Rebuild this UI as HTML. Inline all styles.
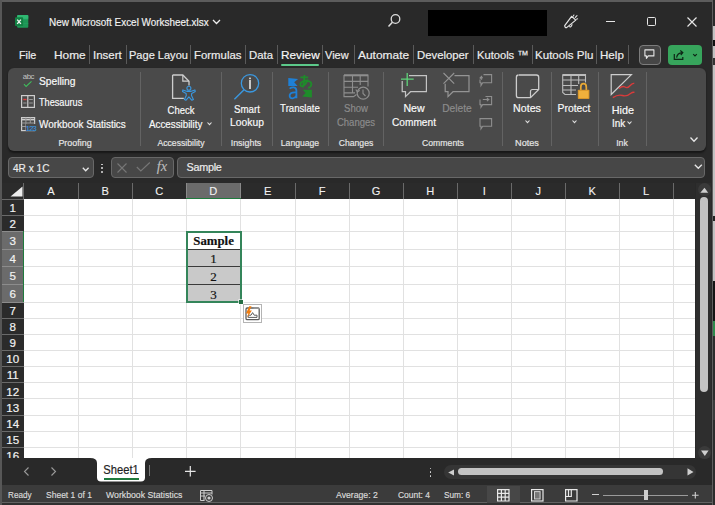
<!DOCTYPE html>
<html><head><meta charset="utf-8">
<style>
*{margin:0;padding:0;box-sizing:border-box}
html,body{width:715px;height:505px;overflow:hidden;background:#292929}
body{position:relative;font-family:"Liberation Sans",sans-serif;color:#fff}
.a{position:absolute;white-space:nowrap;line-height:1;-webkit-text-stroke:0.18px currentColor}
svg{position:absolute;overflow:visible}
</style></head><body>
<div class="a" style="left:0px;top:0px;width:715px;height:2px;background:#5c5c5c;"></div>
<div class="a" style="left:0px;top:0px;width:2px;height:505px;background:#575757;"></div>
<div class="a" style="left:711.5px;top:0px;width:1px;height:505px;background:#5e5e5e;"></div>
<div class="a" style="left:712.5px;top:0px;width:2.5px;height:26px;background:#2a2a2a;"></div>
<div class="a" style="left:712.5px;top:26px;width:2.5px;height:255px;background:#c2c2c2;"></div>
<div class="a" style="left:713px;top:40px;width:2px;height:6.3px;background:#111;"></div>
<div class="a" style="left:713px;top:57.7px;width:2px;height:7px;background:#333;"></div>
<div class="a" style="left:713px;top:216px;width:2px;height:5px;background:#222;"></div>
<div class="a" style="left:712.5px;top:281px;width:2.5px;height:39.5px;background:#151515;"></div>
<div class="a" style="left:712.5px;top:320.5px;width:2.5px;height:15px;background:#2f8a4d;"></div>
<div class="a" style="left:712.5px;top:335.5px;width:2.5px;height:170px;background:#2c2c2c;"></div>
<div class="a" style="left:712.5px;top:400px;width:2.5px;height:20px;background:#3a3a3a;"></div>
<svg style="left:10px;top:8px" width="26" height="24" viewBox="0 0 26 24"><rect x="7.1" y="6.9" width="11.2" height="12.8" rx="1" fill="#1e9556"/>
<rect x="7.1" y="6.9" width="11.2" height="4.3" rx="1" fill="#2fb872"/>
<path d="M12 11.2 H18.3 M12 15.4 H18.3" stroke="#23a563" stroke-width="0.6"/>
<rect x="5" y="9.3" width="8.1" height="8.8" rx="0.8" fill="#128043"/>
<path d="M7.2 11.6 L10.9 15.9 M10.9 11.6 L7.2 15.9" stroke="#f4f4f4" stroke-width="1.4"/></svg>
<div class="a" style="left:49.30px;top:17.02px;font-size:11.2px;letter-spacing:0px;color:#f2f2f2;font-weight:normal;font-family:'Liberation Sans',sans-serif;transform:scaleX(0.8866);transform-origin:0 0;">New Microsoft Excel Worksheet.xlsx</div>
<svg style="left:212px;top:19px" width="9" height="6" viewBox="0 0 9 6"><path d="M1 1 L4.5 4.5 L8 1" stroke="#eee" stroke-width="1.3" fill="none"/></svg>
<svg style="left:387px;top:13px" width="14" height="15" viewBox="0 0 14 15"><circle cx="8.5" cy="6" r="4.3" stroke="#ddd" stroke-width="1.3" fill="none"/><path d="M5.4 9.2 L1.5 13.5" stroke="#ddd" stroke-width="1.5"/></svg>
<div class="a" style="left:428px;top:10px;width:119px;height:26px;background:#000;"></div>
<svg style="left:558px;top:8px" width="30" height="26" viewBox="0 0 30 26"><path d="M6.7 17.6 L13.6 8.3 L17.8 12.1 L8.6 19.6 Q7 20.2 6.7 17.6 Z" stroke="#e4e4e4" stroke-width="1.2" fill="none" stroke-linejoin="round"/><path d="M11.2 18.4 Q12.8 20.2 14.2 16.3" stroke="#e4e4e4" stroke-width="1.1" fill="none"/><path d="M15.4 7.9 L15.9 7 M17.3 9.4 L19 7.7 M18.4 11.2 L19.6 10.8" stroke="#e4e4e4" stroke-width="1.1" stroke-linecap="round"/></svg>
<div class="a" style="left:606px;top:21px;width:9px;height:1.3px;background:#e6e6e6;"></div>
<div class="a" style="left:647px;top:17px;width:9px;height:9px;background:transparent;border:1.2px solid #e6e6e6;border-radius:1.5px"></div>
<svg style="left:687px;top:17px" width="10" height="10" viewBox="0 0 10 10"><path d="M0.5 0.5 L9.5 9.5 M9.5 0.5 L0.5 9.5" stroke="#e6e6e6" stroke-width="1.2"/></svg>
<div class="a" style="left:19.00px;top:49.71px;font-size:11.8px;letter-spacing:0px;color:#eeeeee;font-weight:normal;font-family:'Liberation Sans',sans-serif;transform:scaleX(0.9111);transform-origin:0 0;">File</div>
<div class="a" style="left:53.90px;top:49.71px;font-size:11.8px;letter-spacing:0px;color:#eeeeee;font-weight:normal;font-family:'Liberation Sans',sans-serif;transform:scaleX(1.0067);transform-origin:0 0;">Home</div>
<div class="a" style="left:92.80px;top:49.71px;font-size:11.8px;letter-spacing:0px;color:#eeeeee;font-weight:normal;font-family:'Liberation Sans',sans-serif;transform:scaleX(0.9724);transform-origin:0 0;">Insert</div>
<div class="a" style="left:129.00px;top:49.71px;font-size:11.8px;letter-spacing:0px;color:#eeeeee;font-weight:normal;font-family:'Liberation Sans',sans-serif;transform:scaleX(0.9355);transform-origin:0 0;">Page Layou</div>
<div class="a" style="left:193.90px;top:49.71px;font-size:11.8px;letter-spacing:0px;color:#eeeeee;font-weight:normal;font-family:'Liberation Sans',sans-serif;transform:scaleX(0.9646);transform-origin:0 0;">Formulas</div>
<div class="a" style="left:249.00px;top:49.71px;font-size:11.8px;letter-spacing:0px;color:#eeeeee;font-weight:normal;font-family:'Liberation Sans',sans-serif;transform:scaleX(0.9625);transform-origin:0 0;">Data</div>
<div class="a" style="left:281.00px;top:49.71px;font-size:11.8px;letter-spacing:0px;color:#f8f8f8;font-weight:normal;font-family:'Liberation Sans',sans-serif;-webkit-text-stroke:0.6px currentColortransform:scaleX(0.9026);transform-origin:0 0;">Review</div>
<div class="a" style="left:325.20px;top:49.71px;font-size:11.8px;letter-spacing:0px;color:#eeeeee;font-weight:normal;font-family:'Liberation Sans',sans-serif;transform:scaleX(0.9308);transform-origin:0 0;">View</div>
<div class="a" style="left:357.80px;top:49.71px;font-size:11.8px;letter-spacing:0px;color:#eeeeee;font-weight:normal;font-family:'Liberation Sans',sans-serif;transform:scaleX(1.0120);transform-origin:0 0;">Automate</div>
<div class="a" style="left:417.00px;top:49.71px;font-size:11.8px;letter-spacing:0px;color:#eeeeee;font-weight:normal;font-family:'Liberation Sans',sans-serif;transform:scaleX(0.9604);transform-origin:0 0;">Developer</div>
<div class="a" style="left:477.30px;top:49.71px;font-size:11.8px;letter-spacing:0px;color:#eeeeee;font-weight:normal;font-family:'Liberation Sans',sans-serif;transform:scaleX(0.9453);transform-origin:0 0;">Kutools ™</div>
<div class="a" style="left:534.60px;top:49.71px;font-size:11.8px;letter-spacing:0px;color:#eeeeee;font-weight:normal;font-family:'Liberation Sans',sans-serif;transform:scaleX(0.9793);transform-origin:0 0;">Kutools Plu</div>
<div class="a" style="left:599.80px;top:49.71px;font-size:11.8px;letter-spacing:0px;color:#eeeeee;font-weight:normal;font-family:'Liberation Sans',sans-serif;transform:scaleX(0.9826);transform-origin:0 0;">Help</div>
<div class="a" style="left:89px;top:45px;width:1px;height:19px;background:#5a5a5a;"></div>
<div class="a" style="left:126px;top:45px;width:1px;height:19px;background:#5a5a5a;"></div>
<div class="a" style="left:190px;top:45px;width:1px;height:19px;background:#5a5a5a;"></div>
<div class="a" style="left:245px;top:45px;width:1px;height:19px;background:#5a5a5a;"></div>
<div class="a" style="left:277px;top:45px;width:1px;height:19px;background:#5a5a5a;"></div>
<div class="a" style="left:322px;top:45px;width:1px;height:19px;background:#5a5a5a;"></div>
<div class="a" style="left:354px;top:45px;width:1px;height:19px;background:#5a5a5a;"></div>
<div class="a" style="left:413px;top:45px;width:1px;height:19px;background:#5a5a5a;"></div>
<div class="a" style="left:473px;top:45px;width:1px;height:19px;background:#5a5a5a;"></div>
<div class="a" style="left:532px;top:45px;width:1px;height:19px;background:#5a5a5a;"></div>
<div class="a" style="left:596px;top:45px;width:1px;height:19px;background:#5a5a5a;"></div>
<div class="a" style="left:628px;top:45px;width:1px;height:19px;background:#5a5a5a;"></div>
<div class="a" style="left:280.5px;top:64px;width:38.5px;height:2px;background:#5cc98a;border-radius:1px"></div>
<div class="a" style="left:639px;top:44.5px;width:22px;height:20px;background:#464646;border:1px solid #7c7c7c;border-radius:4px"></div>
<svg style="left:644px;top:49px" width="12" height="12" viewBox="0 0 12 12"><path d="M0.9 0.9 H9.9 V6.9 H4.2 L2.4 9.4 V6.9 H0.9 Z" stroke="#e6e6e6" stroke-width="1.1" fill="none" stroke-linejoin="round"/></svg>
<div class="a" style="left:668px;top:44.5px;width:34px;height:20px;background:#37a55c;border-radius:4px"></div>
<svg style="left:672px;top:48px" width="30" height="14" viewBox="0 0 30 14"><path d="M2.3 6 V11.3 H10.8 V9" stroke="#0d2616" stroke-width="1.2" fill="none"/><path d="M4.6 9.6 Q5.2 5 10.5 4.6 M8.3 2.5 L10.8 4.6 L8.8 7" stroke="#0d2616" stroke-width="1.2" fill="none"/><path d="M21.2 6.2 L23 8 L24.8 6.2" stroke="#0d2616" stroke-width="1.2" fill="none"/></svg>
<div class="a" style="left:8px;top:68px;width:697.5px;height:82.5px;background:#4a4a4a;border-radius:6px;box-shadow:0 1.5px 2px rgba(0,0,0,0.45)"></div>
<div class="a" style="left:140px;top:72px;width:1px;height:74px;background:#636363;"></div>
<div class="a" style="left:221px;top:72px;width:1px;height:74px;background:#636363;"></div>
<div class="a" style="left:272px;top:72px;width:1px;height:74px;background:#636363;"></div>
<div class="a" style="left:328px;top:72px;width:1px;height:74px;background:#636363;"></div>
<div class="a" style="left:383px;top:72px;width:1px;height:74px;background:#636363;"></div>
<div class="a" style="left:502px;top:72px;width:1px;height:74px;background:#636363;"></div>
<div class="a" style="left:551px;top:72px;width:1px;height:74px;background:#636363;"></div>
<div class="a" style="left:598px;top:72px;width:1px;height:74px;background:#636363;"></div>
<div class="a" style="left:646px;top:72px;width:1px;height:74px;background:#636363;"></div>
<div class="a" style="left:38.60px;top:76.06px;font-size:10.8px;letter-spacing:0px;color:#fafafa;font-weight:normal;font-family:'Liberation Sans',sans-serif;transform:scaleX(0.9500);transform-origin:0 0;">Spelling</div>
<div class="a" style="left:39.00px;top:97.36px;font-size:10.8px;letter-spacing:0px;color:#fafafa;font-weight:normal;font-family:'Liberation Sans',sans-serif;transform:scaleX(0.8471);transform-origin:0 0;">Thesaurus</div>
<div class="a" style="left:39.20px;top:118.76px;font-size:10.8px;letter-spacing:0px;color:#fafafa;font-weight:normal;font-family:'Liberation Sans',sans-serif;transform:scaleX(0.9168);transform-origin:0 0;">Workbook Statistics</div>
<div class="a" style="left:-24.60px;width:200px;text-align:center;top:137.84px;font-size:9.4px;letter-spacing:0px;color:#e6e6e6;font-weight:normal;font-family:'Liberation Sans',sans-serif;transform:scaleX(0.9514);transform-origin:50% 0;">Proofing</div>
<div class="a" style="left:81.20px;width:200px;text-align:center;top:105.26px;font-size:10.8px;letter-spacing:0px;color:#fafafa;font-weight:normal;font-family:'Liberation Sans',sans-serif;transform:scaleX(0.8774);transform-origin:50% 0;">Check</div>
<div class="a" style="left:149.20px;top:118.66px;font-size:10.8px;letter-spacing:0px;color:#fafafa;font-weight:normal;font-family:'Liberation Sans',sans-serif;transform:scaleX(0.9068);transform-origin:0 0;">Accessibility</div>
<div class="a" style="left:81.20px;width:200px;text-align:center;top:137.84px;font-size:9.4px;letter-spacing:0px;color:#e6e6e6;font-weight:normal;font-family:'Liberation Sans',sans-serif;transform:scaleX(0.9216);transform-origin:50% 0;">Accessibility</div>
<div class="a" style="left:146.70px;width:200px;text-align:center;top:103.86px;font-size:10.8px;letter-spacing:0px;color:#fafafa;font-weight:normal;font-family:'Liberation Sans',sans-serif;transform:scaleX(0.9000);transform-origin:50% 0;">Smart</div>
<div class="a" style="left:146.80px;width:200px;text-align:center;top:116.66px;font-size:10.8px;letter-spacing:0px;color:#fafafa;font-weight:normal;font-family:'Liberation Sans',sans-serif;transform:scaleX(0.9529);transform-origin:50% 0;">Lookup</div>
<div class="a" style="left:146.30px;width:200px;text-align:center;top:137.84px;font-size:9.4px;letter-spacing:0px;color:#e6e6e6;font-weight:normal;font-family:'Liberation Sans',sans-serif;transform:scaleX(0.9484);transform-origin:50% 0;">Insights</div>
<div class="a" style="left:200.40px;width:200px;text-align:center;top:103.26px;font-size:10.8px;letter-spacing:0px;color:#fafafa;font-weight:normal;font-family:'Liberation Sans',sans-serif;transform:scaleX(0.8909);transform-origin:50% 0;">Translate</div>
<div class="a" style="left:200.10px;width:200px;text-align:center;top:137.84px;font-size:9.4px;letter-spacing:0px;color:#e6e6e6;font-weight:normal;font-family:'Liberation Sans',sans-serif;transform:scaleX(0.9190);transform-origin:50% 0;">Language</div>
<div class="a" style="left:256.00px;width:200px;text-align:center;top:103.36px;font-size:10.8px;letter-spacing:0px;color:#8c8c8c;font-weight:normal;font-family:'Liberation Sans',sans-serif;transform:scaleX(0.8889);transform-origin:50% 0;">Show</div>
<div class="a" style="left:256.00px;width:200px;text-align:center;top:116.66px;font-size:10.8px;letter-spacing:0px;color:#8c8c8c;font-weight:normal;font-family:'Liberation Sans',sans-serif;transform:scaleX(0.8837);transform-origin:50% 0;">Changes</div>
<div class="a" style="left:256.00px;width:200px;text-align:center;top:137.84px;font-size:9.4px;letter-spacing:0px;color:#e6e6e6;font-weight:normal;font-family:'Liberation Sans',sans-serif;transform:scaleX(0.9189);transform-origin:50% 0;">Changes</div>
<div class="a" style="left:314.30px;width:200px;text-align:center;top:103.36px;font-size:10.8px;letter-spacing:0px;color:#fafafa;font-weight:normal;font-family:'Liberation Sans',sans-serif;transform:scaleX(0.9810);transform-origin:50% 0;">New</div>
<div class="a" style="left:314.00px;width:200px;text-align:center;top:116.66px;font-size:10.8px;letter-spacing:0px;color:#fafafa;font-weight:normal;font-family:'Liberation Sans',sans-serif;transform:scaleX(0.9383);transform-origin:50% 0;">Comment</div>
<div class="a" style="left:357.20px;width:200px;text-align:center;top:103.36px;font-size:10.8px;letter-spacing:0px;color:#8c8c8c;font-weight:normal;font-family:'Liberation Sans',sans-serif;transform:scaleX(0.9500);transform-origin:50% 0;">Delete</div>
<div class="a" style="left:342.80px;width:200px;text-align:center;top:137.84px;font-size:9.4px;letter-spacing:0px;color:#e6e6e6;font-weight:normal;font-family:'Liberation Sans',sans-serif;transform:scaleX(0.9244);transform-origin:50% 0;">Comments</div>
<div class="a" style="left:427.30px;width:200px;text-align:center;top:103.06px;font-size:10.8px;letter-spacing:0px;color:#fafafa;font-weight:normal;font-family:'Liberation Sans',sans-serif;transform:scaleX(0.9852);transform-origin:50% 0;">Notes</div>
<div class="a" style="left:427.30px;width:200px;text-align:center;top:137.84px;font-size:9.4px;letter-spacing:0px;color:#e6e6e6;font-weight:normal;font-family:'Liberation Sans',sans-serif;transform:scaleX(0.9750);transform-origin:50% 0;">Notes</div>
<div class="a" style="left:474.40px;width:200px;text-align:center;top:102.56px;font-size:10.8px;letter-spacing:0px;color:#fafafa;font-weight:normal;font-family:'Liberation Sans',sans-serif;transform:scaleX(0.9576);transform-origin:50% 0;">Protect</div>
<div class="a" style="left:522.90px;width:200px;text-align:center;top:105.16px;font-size:10.8px;letter-spacing:0px;color:#fafafa;font-weight:normal;font-family:'Liberation Sans',sans-serif;transform:scaleX(1.0000);transform-origin:50% 0;">Hide</div>
<div class="a" style="left:611.90px;top:118.26px;font-size:10.8px;letter-spacing:0px;color:#fafafa;font-weight:normal;font-family:'Liberation Sans',sans-serif;transform:scaleX(0.9214);transform-origin:0 0;">Ink</div>
<div class="a" style="left:522.20px;width:200px;text-align:center;top:137.84px;font-size:9.4px;letter-spacing:0px;color:#e6e6e6;font-weight:normal;font-family:'Liberation Sans',sans-serif;transform:scaleX(0.9333);transform-origin:50% 0;">Ink</div>
<svg style="left:206.5px;top:121.5px" width="5" height="3" viewBox="0 0 5 3"><path d="M0.5 0.5 L2.5 2.7 L4.5 0.5" stroke="#e0e0e0" stroke-width="1.1" fill="none"/></svg>
<svg style="left:524.5px;top:120px" width="5" height="3" viewBox="0 0 5 3"><path d="M0.5 0.5 L2.5 2.7 L4.5 0.5" stroke="#e0e0e0" stroke-width="1.1" fill="none"/></svg>
<svg style="left:572px;top:119.5px" width="5" height="3" viewBox="0 0 5 3"><path d="M0.5 0.5 L2.5 2.7 L4.5 0.5" stroke="#e0e0e0" stroke-width="1.1" fill="none"/></svg>
<svg style="left:627.3px;top:121.3px" width="5" height="3" viewBox="0 0 5 3"><path d="M0.5 0.5 L2.5 2.7 L4.5 0.5" stroke="#e0e0e0" stroke-width="1.1" fill="none"/></svg>
<svg style="left:689.5px;top:137px" width="8" height="4.5" viewBox="0 0 8 4.5"><path d="M0.5 0.5 L4.0 4.2 L7.5 0.5" stroke="#e8e8e8" stroke-width="1.3" fill="none"/></svg>
<div class="a" style="left:22.80px;top:73.00px;font-size:7.8px;letter-spacing:-0.45px;color:#c4c4c4;font-weight:normal;font-family:'Liberation Sans',sans-serif;-webkit-text-stroke:0px">abc</div>
<svg style="left:23px;top:80px" width="10" height="8" viewBox="0 0 10 8"><path d="M1 4.1 L3.1 6.5 L8.5 1.3" stroke="#3fbf5c" stroke-width="1.1" fill="none"/></svg>
<svg style="left:21px;top:95px" width="14" height="13" viewBox="0 0 14 13"><rect x="0.6" y="0.6" width="12.8" height="11.8" stroke="#cdcdcd" stroke-width="1.2" fill="none"/><path d="M6.8 0.6 V12.4" stroke="#cdcdcd" stroke-width="1.2"/><path d="M2.2 4.5 H5.5" stroke="#e04040" stroke-width="1.4"/><path d="M2.2 8 H5.5 M8.2 4.5 H11.8 M8.2 8 H11.8" stroke="#9a9a9a" stroke-width="1"/></svg>
<svg style="left:21px;top:116.5px" width="15" height="15" viewBox="0 0 15 15"><rect x="0.6" y="0.6" width="13" height="13" stroke="#cdcdcd" stroke-width="1.2" fill="none"/><path d="M0.6 2.6 H13.6" stroke="#cdcdcd" stroke-width="1.6"/><path d="M0.6 6 H13.6 M0.6 9.5 H5 M4.9 0.6 V13.6 M9.3 0.6 V6" stroke="#9a9a9a" stroke-width="1"/></svg>
<div class="a" style="left:26px;top:124px;width:9.5px;height:7px;background:#4a4a4a;"></div>
<div class="a" style="left:25.80px;top:124.54px;font-size:7.4px;letter-spacing:-0.7px;color:#3a98e0;font-weight:normal;font-family:'Liberation Sans',sans-serif;-webkit-text-stroke:0.15px currentColor">123</div>
<svg style="left:165px;top:70px" width="35" height="34" viewBox="0 0 35 34"><path d="M7.6 5 H17.8 L24 11.2 V15.5 M18.8 28.3 H7.6 V5" stroke="#cdcdcd" stroke-width="1.3" fill="none"/><path d="M17.8 5 V11.2 H24" stroke="#cdcdcd" stroke-width="1.2" fill="none"/><circle cx="23.9" cy="18.3" r="2" stroke="#3a98e0" stroke-width="1.1" fill="none"/><path d="M17.9 19.9 L22.3 21.4 H25.5 L29.9 19.9 L30.3 21.6 L26.7 23.4 L26.5 25.4 L28.4 29.5 L26.9 30.3 L23.9 26.9 L20.9 30.3 L19.4 29.5 L21.3 25.4 L21.1 23.4 L17.5 21.6 Z" stroke="#3a98e0" stroke-width="1.1" fill="none" stroke-linejoin="round"/></svg>
<svg style="left:228px;top:70px" width="38" height="34" viewBox="0 0 38 34"><circle cx="22" cy="13.3" r="8.7" stroke="#3a98e0" stroke-width="1.3" fill="none"/><path d="M15.8 19.9 L6.4 29.3" stroke="#3a98e0" stroke-width="1.4"/><rect x="21" y="7.6" width="2" height="1.6" fill="#c8c8c8"/><rect x="21" y="10" width="2" height="9" fill="#c8c8c8"/></svg>
<svg style="left:284px;top:70px" width="34" height="34" viewBox="0 0 34 34"><path d="M4.3 7.9 L14.1 8.9 L10.2 12.2 L13.6 16.1 L4.3 16.1 Z" fill="#1f80d6"/><path d="M5.6 18.6 Q7.5 17.2 9.8 17.4 Q12.4 17.8 12.4 20.6 V28.2 M12.4 22.4 Q6.5 21.8 5.7 25 Q5.3 28.4 8.7 28.3 Q11.2 28.1 12.4 25.6" stroke="#1f80d6" stroke-width="1.8" fill="none"/><path d="M16.4 7.4 H24.2 M20.5 4.9 Q20.4 12 18.8 17.6 M23.8 9.3 Q21.2 16 18 16.3 Q15.7 16.2 16.6 13.2 Q18.6 10.3 23 10.6 Q27.8 11.4 27.3 14.6 Q26.9 17.2 24 18" stroke="#1e8c2a" stroke-width="1.8" fill="none"/><path d="M27.9 27.4 L18.2 26.6 L21.6 23.1 L18.8 19.7 L27.9 19.7 Z" fill="#1e8c2a"/></svg>
<svg style="left:340px;top:70px" width="34" height="34" viewBox="0 0 34 34"><path d="M4 5 H28 V16.5 M4 5 V26.6 H13.5 L16.5 24.5 M4 11.4 H28 M4 17.2 H18 M4 22.9 H15 M12.5 5 V22.9 M20.2 5 V15 M28 5 V15" stroke="#8e8e8e" stroke-width="1.1" fill="none"/><path d="M4 5.4 H28" stroke="#8e8e8e" stroke-width="1.8"/><circle cx="23.2" cy="23.2" r="6" stroke="#8e8e8e" stroke-width="1.2" fill="#4a4a4a"/><path d="M23 19.5 V23.5 L25.5 26" stroke="#8e8e8e" stroke-width="1.1" fill="none"/><path d="M15.8 19.5 L17.4 22 L19.8 20.4" stroke="#8e8e8e" stroke-width="1.1" fill="none"/></svg>
<svg style="left:396px;top:68px" width="40" height="32" viewBox="0 0 40 32"><path d="M13 7.6 H30.4 V23.7 H14.5 L9.5 28.6 V23.7 H6.2 V13" stroke="#c4c4c4" stroke-width="1.2" fill="none"/><path d="M11.2 5 V17.9 M5 11.2 H17.7" stroke="#5fd37a" stroke-width="1.3"/></svg>
<svg style="left:440px;top:68px" width="40" height="32" viewBox="0 0 40 32"><path d="M14.5 7.6 H29 V23.7 H13 L8 28.6 V23.7 H5.2 V15.7" stroke="#949494" stroke-width="1.2" fill="none"/><path d="M3.5 5 L14.2 15.7 M14.2 5 L3.5 15.7" stroke="#949494" stroke-width="1.1"/></svg>
<svg style="left:474px;top:68px" width="26" height="66" viewBox="0 0 26 66"><path d="M9.5 6.6 H17.6 V14.8 H8.7 L7 17.6 V14.8 H6 V11.5 M9 9.8 L6.3 9.8 L8 8 M6.3 9.8 L8 11.5" stroke="#8e8e8e" stroke-width="1.1" fill="none"/><path d="M11.5 28.5 H17.6 V36.6 H8.7 L7 39.2 V36.6 H6 V31.5 M8.8 31.5 H14.6 L12.9 29.8 M14.6 31.5 L12.9 33.2" stroke="#8e8e8e" stroke-width="1.1" fill="none"/><path d="M6 50.6 H17.6 V58.2 H8.7 L7 60.8 V58.2 H6 Z" stroke="#8e8e8e" stroke-width="1.1" fill="none"/></svg>
<svg style="left:510px;top:70px" width="34" height="34" viewBox="0 0 34 34"><path d="M9 5 H26.5 Q28.7 5 28.7 7.2 V19.5 L20.5 27.6 H8.6 Q6.4 27.6 6.4 25.4 V7.2 Q6.4 5 8.6 5" stroke="#cdcdcd" stroke-width="1.3" fill="none"/><path d="M28.7 19.5 H22.5 Q20.5 19.5 20.5 21.5 V27.6" stroke="#cdcdcd" stroke-width="1.2" fill="none"/></svg>
<svg style="left:560px;top:70px" width="34" height="34" viewBox="0 0 34 34"><path d="M2.7 4.5 H25.5 V12.5 M2.7 4.5 V22.5 L5 24.5 H16 M2.7 10 H25.5 M2.7 15.5 H18 M2.7 20 H16 M11 4.5 V24.5 M18.7 4.5 V14" stroke="#bdbdbd" stroke-width="1.1" fill="none"/><path d="M2.7 5.2 H25.5" stroke="#bdbdbd" stroke-width="1.6"/><path d="M20.8 20 V16.9 Q20.8 13.6 23.5 13.6 Q26.3 13.6 26.3 16.9 V20" stroke="#e9a935" stroke-width="1.7" fill="none"/><rect x="17.8" y="19.8" width="11.6" height="9.2" rx="0.8" fill="#d8952a"/><rect x="18.8" y="20.8" width="9.6" height="7.2" fill="#f0b03c"/></svg>
<svg style="left:606px;top:70px" width="34" height="34" viewBox="0 0 34 34"><path d="M5.2 4.6 H25.4 L5.2 24.5 Z" stroke="#cdcdcd" stroke-width="1.2" fill="none" stroke-linejoin="miter"/><path d="M13 18.5 Q16.5 15.5 19 17 Q21.5 18.8 24.5 15.2 Q26.5 13 28.3 13.4" stroke="#d93b3b" stroke-width="1.4" fill="none"/><path d="M6.8 27.6 Q12 24.2 16.5 25.5 Q20.5 26.8 24.5 23.5 Q26.8 21.8 28.5 22.3" stroke="#d93b3b" stroke-width="1.4" fill="none"/></svg>
<div class="a" style="left:8px;top:157.4px;width:86px;height:20.3px;background:#474747;border:1px solid #686868;border-radius:4px"></div>
<div class="a" style="left:13.00px;top:162.83px;font-size:10.6px;letter-spacing:0px;color:#ececec;font-weight:normal;font-family:'Liberation Sans',sans-serif;transform:scaleX(0.9526);transform-origin:0 0;">4R x 1C</div>
<svg style="left:82px;top:166.5px" width="8" height="5" viewBox="0 0 8 5"><path d="M0.8 0.8 L3.7 3.8 L6.6 0.8" stroke="#e6e6e6" stroke-width="1.3" fill="none"/></svg>
<div class="a" style="left:101.4px;top:163.7px;width:1.8px;height:1.8px;background:#dcdcdc;border-radius:1px"></div>
<div class="a" style="left:101.4px;top:167.29999999999998px;width:1.8px;height:1.8px;background:#dcdcdc;border-radius:1px"></div>
<div class="a" style="left:101.4px;top:170.9px;width:1.8px;height:1.8px;background:#dcdcdc;border-radius:1px"></div>
<div class="a" style="left:111px;top:157.4px;width:62.5px;height:20.3px;background:#474747;border:1px solid #686868;border-radius:4px"></div>
<svg style="left:117px;top:163px" width="10" height="10" viewBox="0 0 10 10"><path d="M0.5 0.5 L9.5 9.5 M9.5 0.5 L0.5 9.5" stroke="#777" stroke-width="1.1"/></svg>
<svg style="left:135.5px;top:162.3px" width="15" height="10" viewBox="0 0 15 10"><path d="M0.8 5 L4.8 9 L13.8 0.5" stroke="#777" stroke-width="1.1" fill="none"/></svg>
<div class="a" style="left:156.80px;top:159.03px;font-size:14.5px;letter-spacing:-0.2px;color:#bdbdbd;font-weight:normal;font-family:'Liberation Serif',serif;font-style:italic;-webkit-text-stroke:0.1px currentColor">fx</div>
<div class="a" style="left:177.3px;top:157.4px;width:528.2px;height:20.3px;background:#474747;border:1px solid #686868;border-radius:4px"></div>
<div class="a" style="left:186.50px;top:162.36px;font-size:10.8px;letter-spacing:-0.25px;color:#ececec;font-weight:normal;font-family:'Liberation Sans',sans-serif;">Sample</div>
<svg style="left:693.5px;top:164px" width="9" height="6" viewBox="0 0 9 6"><path d="M0.8 0.8 L4.3 4.3 L7.8 0.8" stroke="#e6e6e6" stroke-width="1.3" fill="none"/></svg>
<div class="a" style="left:2px;top:183px;width:693px;height:16px;background:#2b2b2b;"></div>
<div class="a" style="left:24px;top:199px;width:671px;height:259px;background:#ffffff;"></div>
<div class="a" style="left:78px;top:199px;width:1px;height:259px;background:#e1e1e1;"></div>
<div class="a" style="left:132px;top:199px;width:1px;height:259px;background:#e1e1e1;"></div>
<div class="a" style="left:186px;top:199px;width:1px;height:259px;background:#e1e1e1;"></div>
<div class="a" style="left:240px;top:199px;width:1px;height:259px;background:#e1e1e1;"></div>
<div class="a" style="left:295px;top:199px;width:1px;height:259px;background:#e1e1e1;"></div>
<div class="a" style="left:349px;top:199px;width:1px;height:259px;background:#e1e1e1;"></div>
<div class="a" style="left:403px;top:199px;width:1px;height:259px;background:#e1e1e1;"></div>
<div class="a" style="left:457px;top:199px;width:1px;height:259px;background:#e1e1e1;"></div>
<div class="a" style="left:511px;top:199px;width:1px;height:259px;background:#e1e1e1;"></div>
<div class="a" style="left:565px;top:199px;width:1px;height:259px;background:#e1e1e1;"></div>
<div class="a" style="left:619px;top:199px;width:1px;height:259px;background:#e1e1e1;"></div>
<div class="a" style="left:673px;top:199px;width:1px;height:259px;background:#e1e1e1;"></div>
<div class="a" style="left:24px;top:215px;width:671px;height:1px;background:#e1e1e1;"></div>
<div class="a" style="left:24px;top:231px;width:671px;height:1px;background:#e1e1e1;"></div>
<div class="a" style="left:24px;top:249px;width:671px;height:1px;background:#e1e1e1;"></div>
<div class="a" style="left:24px;top:266px;width:671px;height:1px;background:#e1e1e1;"></div>
<div class="a" style="left:24px;top:284px;width:671px;height:1px;background:#e1e1e1;"></div>
<div class="a" style="left:24px;top:302px;width:671px;height:1px;background:#e1e1e1;"></div>
<div class="a" style="left:24px;top:318px;width:671px;height:1px;background:#e1e1e1;"></div>
<div class="a" style="left:24px;top:334px;width:671px;height:1px;background:#e1e1e1;"></div>
<div class="a" style="left:24px;top:350px;width:671px;height:1px;background:#e1e1e1;"></div>
<div class="a" style="left:24px;top:366px;width:671px;height:1px;background:#e1e1e1;"></div>
<div class="a" style="left:24px;top:382px;width:671px;height:1px;background:#e1e1e1;"></div>
<div class="a" style="left:24px;top:398px;width:671px;height:1px;background:#e1e1e1;"></div>
<div class="a" style="left:24px;top:415px;width:671px;height:1px;background:#e1e1e1;"></div>
<div class="a" style="left:24px;top:431px;width:671px;height:1px;background:#e1e1e1;"></div>
<div class="a" style="left:24px;top:447px;width:671px;height:1px;background:#e1e1e1;"></div>
<div class="a" style="left:78px;top:183px;width:1px;height:16px;background:#6a6a6a;"></div>
<div class="a" style="left:132px;top:183px;width:1px;height:16px;background:#6a6a6a;"></div>
<div class="a" style="left:186px;top:183px;width:1px;height:16px;background:#6a6a6a;"></div>
<div class="a" style="left:240px;top:183px;width:1px;height:16px;background:#6a6a6a;"></div>
<div class="a" style="left:295px;top:183px;width:1px;height:16px;background:#6a6a6a;"></div>
<div class="a" style="left:349px;top:183px;width:1px;height:16px;background:#6a6a6a;"></div>
<div class="a" style="left:403px;top:183px;width:1px;height:16px;background:#6a6a6a;"></div>
<div class="a" style="left:457px;top:183px;width:1px;height:16px;background:#6a6a6a;"></div>
<div class="a" style="left:511px;top:183px;width:1px;height:16px;background:#6a6a6a;"></div>
<div class="a" style="left:565px;top:183px;width:1px;height:16px;background:#6a6a6a;"></div>
<div class="a" style="left:619px;top:183px;width:1px;height:16px;background:#6a6a6a;"></div>
<div class="a" style="left:673px;top:183px;width:1px;height:16px;background:#6a6a6a;"></div>
<div class="a" style="left:-49.05px;width:200px;text-align:center;top:186.10px;font-size:11.1px;letter-spacing:0px;color:#f2f2f2;font-weight:normal;font-family:'Liberation Sans',sans-serif;-webkit-text-stroke:0.1px currentColor">A</div>
<div class="a" style="left:5.20px;width:200px;text-align:center;top:186.10px;font-size:11.1px;letter-spacing:0px;color:#f2f2f2;font-weight:normal;font-family:'Liberation Sans',sans-serif;-webkit-text-stroke:0.1px currentColor">B</div>
<div class="a" style="left:59.20px;width:200px;text-align:center;top:186.10px;font-size:11.1px;letter-spacing:0px;color:#f2f2f2;font-weight:normal;font-family:'Liberation Sans',sans-serif;-webkit-text-stroke:0.1px currentColor">C</div>
<div class="a" style="left:186px;top:183px;width:55px;height:15px;background:#6b6b6b;border-left:1px solid #8a8a8a;border-right:1px solid #8a8a8a"></div>
<div class="a" style="left:186px;top:197.8px;width:55px;height:1.4px;background:#1f7a3d;"></div>
<div class="a" style="left:113.20px;width:200px;text-align:center;top:186.10px;font-size:11.1px;letter-spacing:0px;color:#f2f2f2;font-weight:normal;font-family:'Liberation Sans',sans-serif;-webkit-text-stroke:0.1px currentColor">D</div>
<div class="a" style="left:167.70px;width:200px;text-align:center;top:186.10px;font-size:11.1px;letter-spacing:0px;color:#f2f2f2;font-weight:normal;font-family:'Liberation Sans',sans-serif;-webkit-text-stroke:0.1px currentColor">E</div>
<div class="a" style="left:222.20px;width:200px;text-align:center;top:186.10px;font-size:11.1px;letter-spacing:0px;color:#f2f2f2;font-weight:normal;font-family:'Liberation Sans',sans-serif;-webkit-text-stroke:0.1px currentColor">F</div>
<div class="a" style="left:276.20px;width:200px;text-align:center;top:186.10px;font-size:11.1px;letter-spacing:0px;color:#f2f2f2;font-weight:normal;font-family:'Liberation Sans',sans-serif;-webkit-text-stroke:0.1px currentColor">G</div>
<div class="a" style="left:330.20px;width:200px;text-align:center;top:186.10px;font-size:11.1px;letter-spacing:0px;color:#f2f2f2;font-weight:normal;font-family:'Liberation Sans',sans-serif;-webkit-text-stroke:0.1px currentColor">H</div>
<div class="a" style="left:384.20px;width:200px;text-align:center;top:186.10px;font-size:11.1px;letter-spacing:0px;color:#f2f2f2;font-weight:normal;font-family:'Liberation Sans',sans-serif;-webkit-text-stroke:0.1px currentColor">I</div>
<div class="a" style="left:438.20px;width:200px;text-align:center;top:186.10px;font-size:11.1px;letter-spacing:0px;color:#f2f2f2;font-weight:normal;font-family:'Liberation Sans',sans-serif;-webkit-text-stroke:0.1px currentColor">J</div>
<div class="a" style="left:492.20px;width:200px;text-align:center;top:186.10px;font-size:11.1px;letter-spacing:0px;color:#f2f2f2;font-weight:normal;font-family:'Liberation Sans',sans-serif;-webkit-text-stroke:0.1px currentColor">K</div>
<div class="a" style="left:546.20px;width:200px;text-align:center;top:186.10px;font-size:11.1px;letter-spacing:0px;color:#f2f2f2;font-weight:normal;font-family:'Liberation Sans',sans-serif;-webkit-text-stroke:0.1px currentColor">L</div>
<div class="a" style="left:23px;top:183px;width:1px;height:16px;background:#6a6a6a;"></div>
<div class="a" style="left:2px;top:199px;width:22px;height:1px;background:#6a6a6a;"></div>
<svg style="left:9.5px;top:186px" width="13" height="11" viewBox="0 0 13 11"><path d="M12.5 0.5 V10.5 H0.5 Z" fill="#ededed"/></svg>
<div class="a" style="left:2px;top:200px;width:22px;height:15px;background:#2b2b2b;"></div>
<div class="a" style="left:2px;top:215px;width:22px;height:1px;background:#6a6a6a;"></div>
<div class="a" style="left:-87.30px;width:200px;text-align:center;top:202.08px;font-size:11.6px;letter-spacing:-0.1px;color:#f2f2f2;font-weight:normal;font-family:'Liberation Sans',sans-serif;">1</div>
<div class="a" style="left:2px;top:216px;width:22px;height:15px;background:#2b2b2b;"></div>
<div class="a" style="left:2px;top:231px;width:22px;height:1px;background:#8c8c8c;"></div>
<div class="a" style="left:-87.30px;width:200px;text-align:center;top:218.08px;font-size:11.6px;letter-spacing:-0.1px;color:#f2f2f2;font-weight:normal;font-family:'Liberation Sans',sans-serif;">2</div>
<div class="a" style="left:2px;top:232px;width:22px;height:17px;background:#6b6b6b;"></div>
<div class="a" style="left:2px;top:249px;width:22px;height:1px;background:#8c8c8c;"></div>
<div class="a" style="left:-87.30px;width:200px;text-align:center;top:235.08px;font-size:11.6px;letter-spacing:-0.1px;color:#f2f2f2;font-weight:normal;font-family:'Liberation Sans',sans-serif;">3</div>
<div class="a" style="left:2px;top:250px;width:22px;height:16px;background:#6b6b6b;"></div>
<div class="a" style="left:2px;top:266px;width:22px;height:1px;background:#8c8c8c;"></div>
<div class="a" style="left:-87.30px;width:200px;text-align:center;top:252.58px;font-size:11.6px;letter-spacing:-0.1px;color:#f2f2f2;font-weight:normal;font-family:'Liberation Sans',sans-serif;">4</div>
<div class="a" style="left:2px;top:267px;width:22px;height:17px;background:#6b6b6b;"></div>
<div class="a" style="left:2px;top:284px;width:22px;height:1px;background:#8c8c8c;"></div>
<div class="a" style="left:-87.30px;width:200px;text-align:center;top:270.08px;font-size:11.6px;letter-spacing:-0.1px;color:#f2f2f2;font-weight:normal;font-family:'Liberation Sans',sans-serif;">5</div>
<div class="a" style="left:2px;top:285px;width:22px;height:17px;background:#6b6b6b;"></div>
<div class="a" style="left:2px;top:302px;width:22px;height:1px;background:#8c8c8c;"></div>
<div class="a" style="left:-87.30px;width:200px;text-align:center;top:288.08px;font-size:11.6px;letter-spacing:-0.1px;color:#f2f2f2;font-weight:normal;font-family:'Liberation Sans',sans-serif;">6</div>
<div class="a" style="left:2px;top:303px;width:22px;height:15px;background:#2b2b2b;"></div>
<div class="a" style="left:2px;top:318px;width:22px;height:1px;background:#6a6a6a;"></div>
<div class="a" style="left:-87.30px;width:200px;text-align:center;top:305.08px;font-size:11.6px;letter-spacing:-0.1px;color:#f2f2f2;font-weight:normal;font-family:'Liberation Sans',sans-serif;">7</div>
<div class="a" style="left:2px;top:319px;width:22px;height:15px;background:#2b2b2b;"></div>
<div class="a" style="left:2px;top:334px;width:22px;height:1px;background:#6a6a6a;"></div>
<div class="a" style="left:-87.30px;width:200px;text-align:center;top:321.08px;font-size:11.6px;letter-spacing:-0.1px;color:#f2f2f2;font-weight:normal;font-family:'Liberation Sans',sans-serif;">8</div>
<div class="a" style="left:2px;top:335px;width:22px;height:15px;background:#2b2b2b;"></div>
<div class="a" style="left:2px;top:350px;width:22px;height:1px;background:#6a6a6a;"></div>
<div class="a" style="left:-87.30px;width:200px;text-align:center;top:337.08px;font-size:11.6px;letter-spacing:-0.1px;color:#f2f2f2;font-weight:normal;font-family:'Liberation Sans',sans-serif;">9</div>
<div class="a" style="left:2px;top:351px;width:22px;height:15px;background:#2b2b2b;"></div>
<div class="a" style="left:2px;top:366px;width:22px;height:1px;background:#6a6a6a;"></div>
<div class="a" style="left:-87.30px;width:200px;text-align:center;top:353.08px;font-size:11.6px;letter-spacing:-0.1px;color:#f2f2f2;font-weight:normal;font-family:'Liberation Sans',sans-serif;">10</div>
<div class="a" style="left:2px;top:367px;width:22px;height:15px;background:#2b2b2b;"></div>
<div class="a" style="left:2px;top:382px;width:22px;height:1px;background:#6a6a6a;"></div>
<div class="a" style="left:-87.30px;width:200px;text-align:center;top:369.33px;font-size:11.6px;letter-spacing:-0.1px;color:#f2f2f2;font-weight:normal;font-family:'Liberation Sans',sans-serif;">11</div>
<div class="a" style="left:2px;top:383px;width:22px;height:15px;background:#2b2b2b;"></div>
<div class="a" style="left:2px;top:398px;width:22px;height:1px;background:#6a6a6a;"></div>
<div class="a" style="left:-87.30px;width:200px;text-align:center;top:385.58px;font-size:11.6px;letter-spacing:-0.1px;color:#f2f2f2;font-weight:normal;font-family:'Liberation Sans',sans-serif;">12</div>
<div class="a" style="left:2px;top:399px;width:22px;height:16px;background:#2b2b2b;"></div>
<div class="a" style="left:2px;top:415px;width:22px;height:1px;background:#6a6a6a;"></div>
<div class="a" style="left:-87.30px;width:200px;text-align:center;top:401.83px;font-size:11.6px;letter-spacing:-0.1px;color:#f2f2f2;font-weight:normal;font-family:'Liberation Sans',sans-serif;">13</div>
<div class="a" style="left:2px;top:416px;width:22px;height:15px;background:#2b2b2b;"></div>
<div class="a" style="left:2px;top:431px;width:22px;height:1px;background:#6a6a6a;"></div>
<div class="a" style="left:-87.30px;width:200px;text-align:center;top:418.08px;font-size:11.6px;letter-spacing:-0.1px;color:#f2f2f2;font-weight:normal;font-family:'Liberation Sans',sans-serif;">14</div>
<div class="a" style="left:2px;top:432px;width:22px;height:15px;background:#2b2b2b;"></div>
<div class="a" style="left:2px;top:447px;width:22px;height:1px;background:#6a6a6a;"></div>
<div class="a" style="left:-87.30px;width:200px;text-align:center;top:434.08px;font-size:11.6px;letter-spacing:-0.1px;color:#f2f2f2;font-weight:normal;font-family:'Liberation Sans',sans-serif;">15</div>
<div class="a" style="left:2px;top:448px;width:22px;height:15px;background:#2b2b2b;"></div>
<div class="a" style="left:2px;top:463px;width:22px;height:1px;background:#6a6a6a;"></div>
<div class="a" style="left:-87.30px;width:200px;text-align:center;top:450.08px;font-size:11.6px;letter-spacing:-0.1px;color:#f2f2f2;font-weight:normal;font-family:'Liberation Sans',sans-serif;">16</div>
<div class="a" style="left:23px;top:231px;width:1.4px;height:71px;background:#1f7a3d;"></div>
<div class="a" style="left:2px;top:458px;width:693px;height:26px;background:#292929;"></div>
<div class="a" style="left:187px;top:249px;width:53px;height:53px;background:#c9c9c9;"></div>
<div class="a" style="left:186.5px;top:248.5px;width:55px;height:1.6px;background:#3a3a3a;"></div>
<div class="a" style="left:186.5px;top:265.5px;width:55px;height:1.6px;background:#3a3a3a;"></div>
<div class="a" style="left:186.5px;top:283.5px;width:55px;height:1.6px;background:#3a3a3a;"></div>
<div class="a" style="left:185.6px;top:230.6px;width:56.4px;height:72.2px;background:transparent;border:2px solid #34855a"></div>
<div class="a" style="left:238.8px;top:299.6px;width:4px;height:4px;background:#236e43;box-shadow:0 0 0 0.6px #ffffff"></div>
<div class="a" style="left:113.60px;width:200px;text-align:center;top:234.76px;font-size:12.8px;letter-spacing:0px;color:#111;font-weight:bold;font-family:'Liberation Serif',serif;">Sample</div>
<div class="a" style="left:113.60px;width:200px;text-align:center;top:251.80px;font-size:13px;letter-spacing:0px;color:#111;font-weight:normal;font-family:'Liberation Serif',serif;">1</div>
<div class="a" style="left:113.60px;width:200px;text-align:center;top:269.60px;font-size:13px;letter-spacing:0px;color:#111;font-weight:normal;font-family:'Liberation Serif',serif;">2</div>
<div class="a" style="left:113.60px;width:200px;text-align:center;top:287.60px;font-size:13px;letter-spacing:0px;color:#111;font-weight:normal;font-family:'Liberation Serif',serif;">3</div>
<div class="a" style="left:243px;top:304px;width:19px;height:18.6px;background:#ffffff;border:1px solid #b4b4b4"></div>
<svg style="left:243px;top:304px" width="19" height="19" viewBox="0 0 19 19"><rect x="3" y="4" width="13.2" height="11.6" rx="1.2" stroke="#5c5c5c" stroke-width="1.3" fill="none"/><path d="M5.2 13.4 H14 V11.2 H11.2 L9.6 8.6 L8 11.2 H5.2 Z" stroke="#5c5c5c" stroke-width="1" fill="#fff"/><rect x="10.5" y="3.3" width="5.5" height="1.6" fill="#9a9a9a"/><path d="M6.2 2.2 L3 9.4 H5.4 L3.9 14 L8.9 6.6 H6.6 L8.6 2.2 Z" fill="#f07d10"/></svg>
<div class="a" style="left:696px;top:183px;width:15px;height:275px;background:#2e2e2e;"></div>
<svg style="left:697.5px;top:183px" width="14" height="14" viewBox="0 0 14 14"><circle cx="6.6" cy="6.6" r="6.5" fill="#3a3a3a"/><path d="M2.3 9.8 L6.5 4.8 L10.2 9.8 Z" fill="#cfcfcf"/></svg>
<div class="a" style="left:700.3px;top:197.2px;width:7.7px;height:194.5px;background:#c3c3c3;border-radius:4px"></div>
<svg style="left:697.5px;top:446px" width="14" height="14" viewBox="0 0 14 14"><circle cx="6.6" cy="6.6" r="6.5" fill="#3a3a3a"/><path d="M3 4.5 L10.6 4.5 L6.8 9.9 Z" fill="#cfcfcf"/></svg>
<svg style="left:90px;top:458px" width="62" height="24" viewBox="0 0 62 24"><path d="M0 0 Q7 0 7 5 V19.5 Q7 23.5 11 23.5 H51 Q55 23.5 55 19.5 V5 Q55 0 62 0 Z" fill="#ffffff"/></svg>
<div class="a" style="left:21.10px;width:200px;text-align:center;top:463.74px;font-size:12px;letter-spacing:0px;color:#1e1e1e;font-weight:normal;font-family:'Liberation Sans',sans-serif;transform:scaleX(0.9324);transform-origin:50% 0;">Sheet1</div>
<div class="a" style="left:103.5px;top:478.3px;width:35.2px;height:1.6px;background:#1f7a3d;"></div>
<div class="a" style="left:149px;top:464.7px;width:1px;height:11.7px;background:#777;"></div>
<svg style="left:184.5px;top:466px" width="11" height="11" viewBox="0 0 11 11"><path d="M5.3 0 V10.6 M0 5.3 H10.6" stroke="#e6e6e6" stroke-width="1.2"/></svg>
<svg style="left:22.5px;top:467px" width="7" height="9" viewBox="0 0 7 9"><path d="M5.5 0.5 L1.5 4.5 L5.5 8.5" stroke="#9a9a9a" stroke-width="1.1" fill="none"/></svg>
<svg style="left:50px;top:467px" width="7" height="9" viewBox="0 0 7 9"><path d="M1.5 0.5 L5.5 4.5 L1.5 8.5" stroke="#9a9a9a" stroke-width="1.1" fill="none"/></svg>
<div class="a" style="left:429.7px;top:467.5px;width:1.8px;height:1.8px;background:#dcdcdc;border-radius:1px"></div>
<div class="a" style="left:429.7px;top:471.1px;width:1.8px;height:1.8px;background:#dcdcdc;border-radius:1px"></div>
<div class="a" style="left:429.7px;top:474.90000000000003px;width:1.8px;height:1.8px;background:#dcdcdc;border-radius:1px"></div>
<div class="a" style="left:444px;top:464.7px;width:252px;height:14.1px;background:#353535;border-radius:7px"></div>
<svg style="left:446.5px;top:468.5px" width="8" height="7" viewBox="0 0 8 7"><path d="M7 0.5 V6.5 L1.2 3.5 Z" fill="#cfcfcf"/></svg>
<div class="a" style="left:458.3px;top:468.1px;width:205.2px;height:7px;background:#c3c3c3;border-radius:3.5px"></div>
<svg style="left:686.5px;top:468px" width="8" height="8" viewBox="0 0 8 8"><path d="M0.5 0.2 V7.6 L6.5 3.9 Z" fill="#cfcfcf"/></svg>
<div class="a" style="left:2px;top:484.5px;width:709.5px;height:17.5px;background:#3b3b3b;"></div>
<div class="a" style="left:2px;top:502px;width:710px;height:1.2px;background:#626262;"></div>
<div class="a" style="left:2px;top:503.2px;width:710px;height:1.8px;background:#303030;"></div>
<div class="a" style="left:7.70px;top:490.07px;font-size:9.6px;letter-spacing:0px;color:#dadada;font-weight:normal;font-family:'Liberation Sans',sans-serif;transform:scaleX(0.8500);transform-origin:0 0;">Ready</div>
<div class="a" style="left:46.20px;top:490.07px;font-size:9.6px;letter-spacing:0px;color:#dadada;font-weight:normal;font-family:'Liberation Sans',sans-serif;transform:scaleX(0.8865);transform-origin:0 0;">Sheet 1 of 1</div>
<div class="a" style="left:106.40px;top:490.07px;font-size:9.6px;letter-spacing:0px;color:#dadada;font-weight:normal;font-family:'Liberation Sans',sans-serif;transform:scaleX(0.9083);transform-origin:0 0;">Workbook Statistics</div>
<svg style="left:200px;top:489.5px" width="14" height="12" viewBox="0 0 14 12"><path d="M0.5 0.5 H12 V4.5 M0.5 0.5 V10.5 H4.5 M0.5 3 H12 M0.5 6 H5 M4 0.5 V10.5" stroke="#cfcfcf" stroke-width="1" fill="none"/><circle cx="9" cy="8" r="3.5" fill="#3b3b3b" stroke="#cfcfcf" stroke-width="1"/><circle cx="9" cy="8" r="1.6" fill="#cfcfcf"/></svg>
<div class="a" style="left:336.10px;top:490.07px;font-size:9.6px;letter-spacing:0px;color:#dadada;font-weight:normal;font-family:'Liberation Sans',sans-serif;transform:scaleX(0.9043);transform-origin:0 0;">Average: 2</div>
<div class="a" style="left:398.30px;top:490.07px;font-size:9.6px;letter-spacing:0px;color:#dadada;font-weight:normal;font-family:'Liberation Sans',sans-serif;transform:scaleX(0.8806);transform-origin:0 0;">Count: 4</div>
<div class="a" style="left:444.20px;top:490.07px;font-size:9.6px;letter-spacing:0px;color:#dadada;font-weight:normal;font-family:'Liberation Sans',sans-serif;transform:scaleX(0.8600);transform-origin:0 0;">Sum: 6</div>
<div class="a" style="left:487px;top:485.5px;width:33px;height:17px;background:#474747;"></div>
<svg style="left:497px;top:488.5px" width="13" height="13" viewBox="0 0 13 13"><path d="M0.6 0.6 H12 V12 H0.6 Z M0.6 4.4 H12 M0.6 8.2 H12 M4.4 0.6 V12 M8.2 0.6 V12" stroke="#e8e8e8" stroke-width="1.2" fill="none"/></svg>
<svg style="left:531px;top:488.5px" width="13" height="13" viewBox="0 0 13 13"><rect x="0.6" y="0.6" width="11.4" height="11.4" stroke="#e8e8e8" stroke-width="1.2" fill="none"/><rect x="3.5" y="2.6" width="5.6" height="7.4" stroke="#cfcfcf" stroke-width="1" fill="#777"/></svg>
<svg style="left:564.5px;top:488.5px" width="13" height="13" viewBox="0 0 13 13"><path d="M0.6 0.6 H12 V12 H0.6 Z M0.6 7.5 H6.3 V0.6 M3.5 0.6 V7.5" stroke="#e8e8e8" stroke-width="1.2" fill="none"/></svg>
<div class="a" style="left:592px;top:494px;width:6.5px;height:1.1px;background:#d0d0d0;"></div>
<div class="a" style="left:603.3px;top:494.7px;width:84.4px;height:1.2px;background:#9a9a9a;"></div>
<div class="a" style="left:644.2px;top:490px;width:3.8px;height:9.7px;background:#cfcfcf;"></div>
<svg style="left:692px;top:491.5px" width="7" height="7" viewBox="0 0 7 7"><path d="M3.3 0 V6.6 M0 3.3 H6.6" stroke="#d0d0d0" stroke-width="1.1"/></svg>
</body></html>
